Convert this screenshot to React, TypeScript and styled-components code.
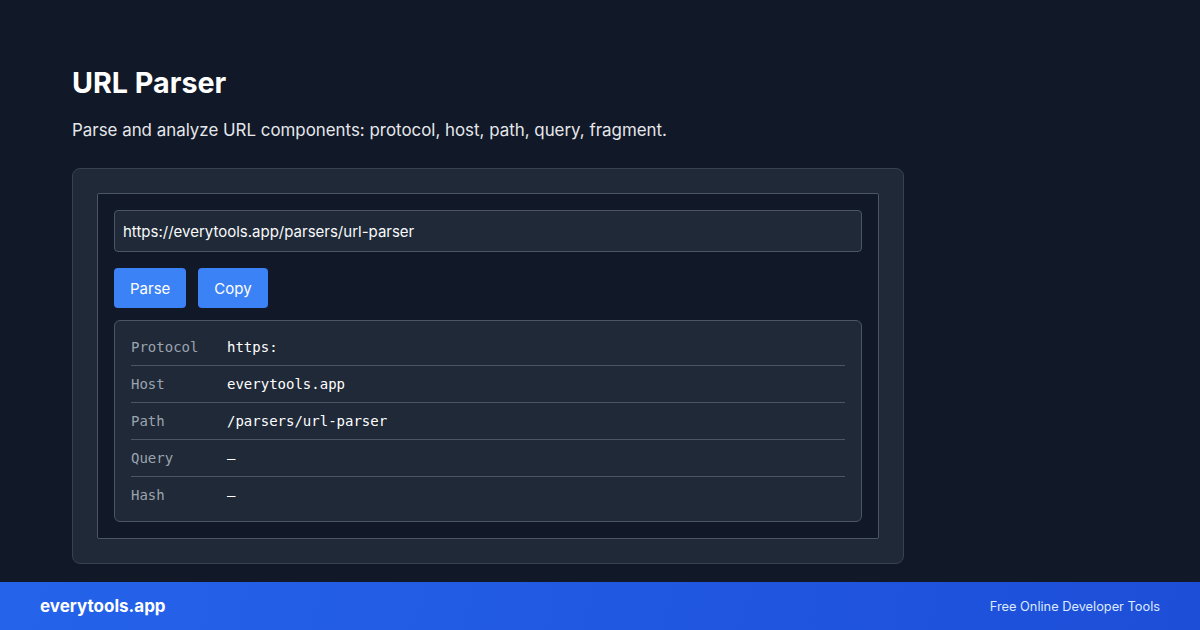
import styled, { createGlobalStyle } from "styled-components";

const GlobalStyle = createGlobalStyle`
  html, body {
    margin: 0;
    padding: 0;
    background: #111827;
  }

  body {
    font-family: Inter, "Noto Sans", sans-serif;
    color: #f9fafb;
  }
`;

const Page = styled.div`
  width: 1200px;
  height: 630px;
  display: flex;
  flex-direction: column;
  overflow: hidden;
`;

const Main = styled.main`
  flex: 1;
  padding: 66px 72px 0;
`;

const Title = styled.h1`
  margin: 0 0 18px;
  font-size: 28.7px;
  line-height: 34px;
  font-weight: 700;
  color: #ffffff;
`;

const Subtitle = styled.p`
  margin: 0 0 26px;
  font-size: 16.9px;
  line-height: 24px;
  color: #e5e7eb;
`;

const Card = styled.section`
  width: 832px;
  box-sizing: border-box;
  padding: 24px;
  background: #1f2937;
  border: 1px solid #374151;
  border-radius: 8px;
`;

const Panel = styled.div`
  padding: 16px;
  background: #111827;
  border: 1px solid #4b5563;
  border-radius: 2px;
`;

const UrlInput = styled.input`
  display: block;
  width: 100%;
  box-sizing: border-box;
  height: 42px;
  padding: 0 8px;
  background: #1f2937;
  border: 1px solid #4b5563;
  border-radius: 4px;
  color: #f9fafb;
  font-family: Inter, "Noto Sans", sans-serif;
  font-size: 15px;
  outline: none;
`;

const Actions = styled.div`
  display: flex;
  gap: 12px;
  margin-top: 16px;
`;

const Button = styled.button`
  height: 40px;
  padding: 0 16px;
  background: #3b82f6;
  border: none;
  border-radius: 4px;
  color: #ffffff;
  font-family: Inter, "Noto Sans", sans-serif;
  font-size: 15px;
  cursor: pointer;
`;

const Results = styled.div`
  margin-top: 12px;
  padding: 8px 16px;
  background: #1f2937;
  border: 1px solid #4b5563;
  border-radius: 6px;
`;

const Row = styled.div<{ $last?: boolean }>`
  display: grid;
  grid-template-columns: 96px 1fr;
  padding: 8px 0;
  font-family: "DejaVu Sans Mono", "Liberation Mono", monospace;
  font-size: 14px;
  line-height: 20px;
  border-bottom: ${(p) => (p.$last ? "none" : "1px solid #4b5563")};
`;

const Label = styled.span`
  color: #9ca3af;
`;

const Value = styled.span`
  color: #ffffff;
`;

const Footer = styled.footer`
  height: 48px;
  flex-shrink: 0;
  display: flex;
  align-items: center;
  justify-content: space-between;
  padding: 0 40px;
  background: linear-gradient(100deg, #2563eb 0%, #1d4ed8 100%);
`;

const Brand = styled.span`
  font-size: 17px;
  font-weight: 700;
  color: #ffffff;
`;

const Tagline = styled.span`
  font-size: 12.8px;
  color: #dbeafe;
`;

const rows = [
  { label: "Protocol", value: "https:" },
  { label: "Host", value: "everytools.app" },
  { label: "Path", value: "/parsers/url-parser" },
  { label: "Query", value: "—" },
  { label: "Hash", value: "—" },
];

const App: React.FC = () => {
  return (
    <Page>
      <GlobalStyle />
      <Main>
        <Title>URL Parser</Title>
        <Subtitle>
          Parse and analyze URL components: protocol, host, path, query,
          fragment.
        </Subtitle>
        <Card>
          <Panel>
            <UrlInput
              readOnly
              value="https://everytools.app/parsers/url-parser"
            />
            <Actions>
              <Button>Parse</Button>
              <Button>Copy</Button>
            </Actions>
            <Results>
              {rows.map((r, i) => (
                <Row key={r.label} $last={i === rows.length - 1}>
                  <Label>{r.label}</Label>
                  <Value>{r.value}</Value>
                </Row>
              ))}
            </Results>
          </Panel>
        </Card>
      </Main>
      <Footer>
        <Brand>everytools.app</Brand>
        <Tagline>Free Online Developer Tools</Tagline>
      </Footer>
    </Page>
  );
};

export default App;
